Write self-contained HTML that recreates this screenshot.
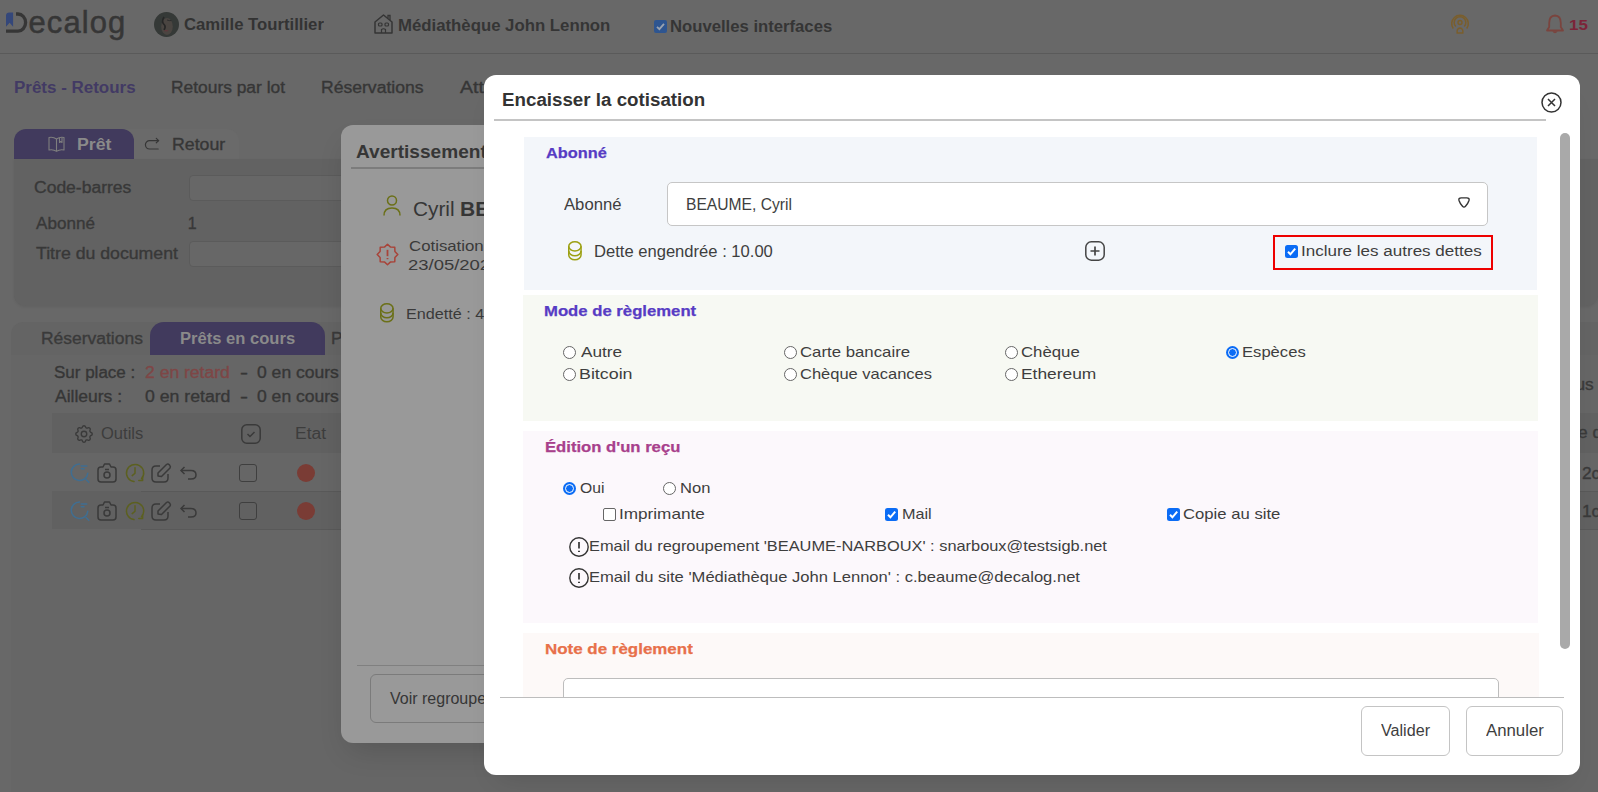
<!DOCTYPE html>
<html lang="fr"><head><meta charset="utf-8"><title>Encaisser la cotisation</title>
<style>
*{margin:0;padding:0;box-sizing:border-box}
html,body{width:1598px;height:792px;overflow:hidden;background:#686868;font-family:"Liberation Sans",sans-serif}
.t{position:absolute;white-space:nowrap}
.b{position:absolute}
svg{position:absolute;overflow:visible}
</style></head><body>
<!-- ============ BASE PAGE (under overlays) ============ -->
<div class="b" style="left:0;top:53px;width:1598px;height:1px;background:#5a5a5a"></div>
<!-- logo -->
<svg style="left:0;top:0" width="30" height="40" viewBox="0 0 30 40"><path d="M16 14 H18 A7.6 8.6 0 0 1 18 31.2 H6" fill="none" stroke="#363636" stroke-width="3.3"/><path d="M6 26.7 V15.5 Q6 12.5 9.5 12.5 H13.1 V26.7 L9.6 22.8 Z" fill="#34477a"/></svg>
<div class="t" style="left:28.5px;top:6.5px;font-size:31px;line-height:31px;color:#363636;letter-spacing:1.1px;-webkit-text-stroke:0.5px #363636">ecalog</div>
<!-- avatar -->
<svg style="left:154px;top:12px" width="25" height="25" viewBox="0 0 25 25"><defs><clipPath id="avc"><circle cx="12.5" cy="12.5" r="12.5"/></clipPath></defs><g clip-path="url(#avc)"><rect width="25" height="25" fill="#353937"/><ellipse cx="13" cy="14.5" rx="5.8" ry="8.5" fill="#4a4541"/><path d="M10 5 Q7 10 10.5 13 Q12 15 10 18" fill="none" stroke="#262626" stroke-width="1.6"/><path d="M13 8 Q15 9 17.5 8.5" fill="none" stroke="#2e2e2e" stroke-width="1"/><ellipse cx="12.2" cy="18.8" rx="2.2" ry="0.8" fill="#5e3a3d"/></g></svg>
<div class="t" style="left:183.66px;top:17.00px;font-size:16px;line-height:16px;font-weight:700;color:#333;transform:scaleX(1.0444);transform-origin:0 0;">Camille Tourtillier</div>
<!-- house icon -->
<svg style="left:374px;top:14px" width="19" height="20" viewBox="0 0 19 20"><path d="M1 19 V8 L9.5 1 L18 8 V19 Z M1 19 H18" fill="none" stroke="#353535" stroke-width="1.5" stroke-linejoin="round"/><path d="M14 4 V1.5 H16 V6" fill="none" stroke="#353535" stroke-width="1.3"/><rect x="4.5" y="9" width="3.5" height="3" rx="1" fill="none" stroke="#353535" stroke-width="1.2"/><rect x="11" y="9" width="3.5" height="3" rx="1" fill="none" stroke="#353535" stroke-width="1.2"/><path d="M7.5 19 V15.5 Q9.5 14 11.5 15.5 V19" fill="none" stroke="#353535" stroke-width="1.2"/></svg>
<div class="t" style="left:397.95px;top:18.00px;font-size:16px;line-height:16px;font-weight:700;color:#353535;transform:scaleX(1.0478);transform-origin:0 0;">Médiathèque John Lennon</div>
<!-- checkbox header -->
<div class="b" style="left:654px;top:20px;width:13px;height:13px;border-radius:2px;background:#2e5590"></div>
<svg style="left:654px;top:20px" width="13" height="13" viewBox="0 0 13 13"><path d="M3 6.8 L5.4 9.2 L10 3.8" fill="none" stroke="#9aa3b0" stroke-width="1.8"/></svg>
<div class="t" style="left:670.46px;top:19.00px;font-size:16px;line-height:16px;font-weight:700;color:#353535;transform:scaleX(1.0422);transform-origin:0 0;">Nouvelles interfaces</div>
<!-- radar icon -->
<svg style="left:1451px;top:14px" width="18" height="20" viewBox="0 0 18 20"><g fill="none" stroke="#7a5e2c" stroke-width="1.5"><circle cx="9" cy="8.5" r="2"/><path d="M4.8 12.5 A5.8 5.8 0 1 1 13.2 12.5"/><path d="M2.3 14.5 A8.3 8.3 0 1 1 15.7 14.5"/><path d="M6.2 19 Q5.5 14.5 9 14 Q12.5 14.5 11.8 19 Z"/></g></svg>
<!-- bell -->
<svg style="left:1546px;top:14px" width="18" height="21" viewBox="0 0 18 21"><g fill="none" stroke="#7a443e" stroke-width="1.8" stroke-linejoin="round"><path d="M9 1.5 Q3.2 1.8 3.2 9 V13 L1 16.5 H17 L14.8 13 V9 Q14.8 1.8 9 1.5 Z"/></g><path d="M6.3 17.2 Q9 21.5 11.7 17.2 Z" fill="#7a443e"/></svg>
<div class="t" style="left:1568.87px;top:17.00px;font-size:15px;line-height:15px;font-weight:700;color:#7c2439;transform:scaleX(1.1333);transform-origin:0 0;">15</div>
<!-- nav -->
<div class="t" style="left:14.34px;top:80.00px;font-size:16px;line-height:16px;font-weight:700;color:#423a64;transform:scaleX(1.0602);transform-origin:0 0;">Prêts - Retours</div><div class="t" style="left:171.21px;top:80.00px;font-size:16px;line-height:16px;font-weight:400;color:#363636;transform:scaleX(1.0865);transform-origin:0 0;-webkit-text-stroke:0.35px #363636;">Retours par lot</div><div class="t" style="left:320.90px;top:80.00px;font-size:16px;line-height:16px;font-weight:400;color:#363636;transform:scaleX(1.0978);transform-origin:0 0;-webkit-text-stroke:0.35px #363636;">Réservations</div><div class="t" style="left:459.80px;top:80.00px;font-size:16px;line-height:16px;font-weight:400;color:#363636;transform:scaleX(1.2200);transform-origin:0 0;-webkit-text-stroke:0.35px #363636;">Attentes</div>
<!-- tabs card 1 -->
<div class="b" style="left:14px;top:129px;width:225px;height:30px;background:#6a6a6a;border-radius:12px 12px 0 0"></div>
<div class="b" style="left:14px;top:129px;width:120px;height:30px;background:#413a5d;border-radius:12px 12px 0 0"></div>
<svg style="left:48px;top:136px" width="17" height="16" viewBox="0 0 17 16"><g fill="none" stroke="#7e7e7e" stroke-width="1.1" stroke-linejoin="round"><path d="M8.5 3 Q5 0.5 1 1.5 V14 Q5 13 8.5 15.3 Q12 13 16 14 V1.5 Q12 0.5 8.5 3 Z"/><path d="M8.5 3 V15.3"/><path d="M11.5 2 V6.5 L12.7 5.5 L14 6.5 V1.6"/></g></svg>
<div class="t" style="left:76.69px;top:137.00px;font-size:16px;line-height:16px;font-weight:700;color:#8a8a8a;transform:scaleX(1.1067);transform-origin:0 0;">Prêt</div>
<svg style="left:145px;top:139px" width="15" height="12" viewBox="0 0 15 12"><g fill="none" stroke="#363636" stroke-width="1.2" stroke-linecap="round" stroke-linejoin="round"><path d="M13.6 1.6 H4.6 A4.2 4.2 0 0 0 4.6 10 H13.2"/><path d="M11.3 -0.6 L13.6 1.6 L11.3 3.8"/></g></svg>
<div class="t" style="left:171.79px;top:137.00px;font-size:16px;line-height:16px;font-weight:400;color:#363636;transform:scaleX(1.1085);transform-origin:0 0;-webkit-text-stroke:0.35px #363636;">Retour</div>
<div class="b" style="left:14px;top:159px;width:1584px;height:147px;background:#626262;border-radius:0 0 12px 12px;box-shadow:0 1px 3px rgba(0,0,0,.08)"></div>
<div class="t" style="left:34.41px;top:180.00px;font-size:16px;line-height:16px;font-weight:400;color:#383838;transform:scaleX(1.0943);transform-origin:0 0;-webkit-text-stroke:0.35px #383838;">Code-barres</div>
<div class="b" style="left:189px;top:175px;width:1380px;height:26px;background:#676767;border:1px solid #5b5b5b;border-radius:4px"></div>
<div class="t" style="left:35.50px;top:216.00px;font-size:16px;line-height:16px;font-weight:400;color:#383838;transform:scaleX(1.0673);transform-origin:0 0;-webkit-text-stroke:0.35px #383838;">Abonné</div><div class="t" style="left:187.80px;top:216.00px;font-size:16px;line-height:16px;font-weight:400;color:#383838;-webkit-text-stroke:0.35px #383838;">1</div><div class="t" style="left:35.50px;top:246.00px;font-size:16px;line-height:16px;font-weight:400;color:#383838;transform:scaleX(1.1055);transform-origin:0 0;-webkit-text-stroke:0.35px #383838;">Titre du document</div>
<div class="b" style="left:189px;top:241px;width:1380px;height:26px;background:#676767;border:1px solid #5b5b5b;border-radius:4px"></div>
<!-- card 2 -->
<div class="b" style="left:11px;top:322px;width:1587px;height:33px;background:#646464;border-radius:12px 0 0 0"></div>
<div class="b" style="left:150px;top:322px;width:175px;height:33px;background:#413a5d;border-radius:14px 14px 0 0"></div>
<div class="t" style="left:40.51px;top:331.00px;font-size:16px;line-height:16px;font-weight:400;color:#3a3a3a;transform:scaleX(1.0913);transform-origin:0 0;-webkit-text-stroke:0.35px #3a3a3a;">Réservations</div><div class="t" style="left:179.66px;top:331.00px;font-size:16px;line-height:16px;font-weight:700;color:#8a8a8a;transform:scaleX(1.0355);transform-origin:0 0;">Prêts en cours</div><div class="t" style="left:330.72px;top:331.00px;font-size:16px;line-height:16px;font-weight:400;color:#3a3a3a;transform:scaleX(1.0800);transform-origin:0 0;-webkit-text-stroke:0.35px #3a3a3a;">Prolongations</div>
<div class="b" style="left:11px;top:355px;width:1587px;height:437px;background:#666"></div>
<div class="t" style="left:54.34px;top:365.00px;font-size:16px;line-height:16px;font-weight:400;color:#363636;transform:scaleX(1.0622);transform-origin:0 0;-webkit-text-stroke:0.35px #363636;">Sur place :</div><div class="t" style="left:144.50px;top:365.00px;font-size:16px;line-height:16px;font-weight:400;color:#7e4646;transform:scaleX(1.0961);transform-origin:0 0;-webkit-text-stroke:0.35px #7e4646;">2 en retard</div><div class="t" style="left:239.50px;top:365.00px;font-size:16px;line-height:16px;font-weight:400;color:#363636;transform:scaleX(1.5000);transform-origin:0 0;-webkit-text-stroke:0.35px #363636;">-</div><div class="t" style="left:257.30px;top:365.00px;font-size:16px;line-height:16px;font-weight:400;color:#363636;transform:scaleX(1.0959);transform-origin:0 0;-webkit-text-stroke:0.35px #363636;">0 en cours</div><div class="t" style="left:55.40px;top:389.00px;font-size:16px;line-height:16px;font-weight:400;color:#363636;transform:scaleX(1.0933);transform-origin:0 0;-webkit-text-stroke:0.35px #363636;">Ailleurs :</div><div class="t" style="left:144.50px;top:389.00px;font-size:16px;line-height:16px;font-weight:400;color:#363636;transform:scaleX(1.1039);transform-origin:0 0;-webkit-text-stroke:0.35px #363636;">0 en retard</div><div class="t" style="left:239.50px;top:389.00px;font-size:16px;line-height:16px;font-weight:400;color:#363636;transform:scaleX(1.5000);transform-origin:0 0;-webkit-text-stroke:0.35px #363636;">-</div><div class="t" style="left:257.30px;top:389.00px;font-size:16px;line-height:16px;font-weight:400;color:#363636;transform:scaleX(1.0959);transform-origin:0 0;-webkit-text-stroke:0.35px #363636;">0 en cours</div>
<div class="b" style="left:52px;top:413px;width:1546px;height:40px;background:#616161"></div>
<div class="b" style="left:52px;top:453px;width:1546px;height:38px;background:#666"></div>
<div class="b" style="left:52px;top:491px;width:1546px;height:38px;background:#616161"></div>
<div class="b" style="left:141px;top:491px;width:1457px;height:1px;background:#595959"></div>
<div class="b" style="left:141px;top:529px;width:1457px;height:1px;background:#595959"></div>
<!-- gear -->
<svg style="left:73px;top:423px" width="22" height="22" viewBox="0 0 24 24"><g fill="none" stroke="#3a3a3a" stroke-width="1.5" stroke-linecap="round" stroke-linejoin="round"><path d="M10.325 4.317c.426 -1.756 2.924 -1.756 3.35 0a1.724 1.724 0 0 0 2.573 1.066c1.543 -.94 3.31 .826 2.37 2.37a1.724 1.724 0 0 0 1.065 2.572c1.756 .426 1.756 2.924 0 3.35a1.724 1.724 0 0 0 -1.066 2.573c.94 1.543 -.826 3.31 -2.37 2.37a1.724 1.724 0 0 0 -2.572 1.065c-.426 1.756 -2.924 1.756 -3.35 0a1.724 1.724 0 0 0 -2.573 -1.066c-1.543 .94 -3.31 -.826 -2.37 -2.37a1.724 1.724 0 0 0 -1.065 -2.572c-1.756 -.426 -1.756 -2.924 0 -3.35a1.724 1.724 0 0 0 1.066 -2.573c-.94 -1.543 .826 -3.31 2.37 -2.37c1 .608 2.296 .07 2.572 -1.065z"/><circle cx="12" cy="12" r="3"/></g></svg>
<div class="t" style="left:100.67px;top:426.00px;font-size:16px;line-height:16px;font-weight:400;color:#3d3d3d;transform:scaleX(1.0325);transform-origin:0 0;">Outils</div>
<svg style="left:241px;top:424px" width="20" height="20" viewBox="0 0 20 20"><g fill="none" stroke="#3a3a3a" stroke-width="1.5"><rect x="0.8" y="0.8" width="18.4" height="18.4" rx="5"/><path d="M6.5 10 L9 12.5 L13.5 8"/></g></svg>
<div class="t" style="left:295.41px;top:426.00px;font-size:16px;line-height:16px;font-weight:400;color:#3d3d3d;transform:scaleX(1.0926);transform-origin:0 0;">Etat</div>
<!-- row icons -->
<svg style="left:70px;top:463px" width="21" height="20" viewBox="0 0 21 20"><g fill="none" stroke="#3f6e92" stroke-width="1.5" stroke-linecap="round"><path d="M9.5 1 A8.3 8.3 0 1 0 17.8 10.2"/><path d="M11.2 3 H16.8 M11.2 5.8 H14"/><path d="M16 16.5 L18.8 19.2"/></g></svg>
<svg style="left:97px;top:463px" width="20" height="20" viewBox="0 0 20 20"><g fill="none" stroke="#3a3a3a" stroke-width="1.5" stroke-linejoin="round"><path d="M1 7 Q1 4 4 4 H6 L7.5 1 H12.5 L14 4 H16 Q19 4 19 7 V16 Q19 19 16 19 H4 Q1 19 1 16 Z"/><circle cx="10" cy="12" r="3"/><path d="M8 6.5 H12"/></g></svg>
<svg style="left:125px;top:463px" width="20" height="20" viewBox="0 0 20 20"><g fill="none" stroke="#5c6020" stroke-width="1.5" stroke-linecap="round" stroke-linejoin="round"><path d="M9 18.6 A8.6 8.6 0 1 1 16.5 15.8"/><path d="M10 4.8 V10.2 L7.2 12.6"/><path d="M13.8 17.6 H17.6 V13.8"/></g></svg>
<svg style="left:151px;top:463px" width="21" height="20" viewBox="0 0 21 20"><g fill="none" stroke="#3a3a3a" stroke-width="1.5" stroke-linejoin="round"><path d="M9 3 H5 Q1 3 1 7 V15 Q1 19 5 19 H13 Q17 19 17 15 V11"/><path d="M7 13 V10 L15.5 1.5 Q17 0.5 18.5 2 Q20 3.5 19 5 L10.5 13.5 Z"/></g></svg>
<svg style="left:180px;top:466px" width="17" height="14" viewBox="0 0 17 14"><g fill="none" stroke="#3a3a3a" stroke-width="1.5"><path d="M4.5 1 L1 4.5 L4.5 8"/><path d="M1 4.5 H11 Q16 4.5 16 9 Q16 13 11 13 H8"/></g></svg>
<div class="b" style="left:239px;top:464px;width:18px;height:18px;border:1.5px solid #3f3f3f;border-radius:3px"></div>
<div class="b" style="left:297px;top:464px;width:18px;height:18px;border-radius:50%;background:#7a3c35"></div>
<svg style="left:70px;top:501px" width="21" height="20" viewBox="0 0 21 20"><g fill="none" stroke="#3f6e92" stroke-width="1.5" stroke-linecap="round"><path d="M9.5 1 A8.3 8.3 0 1 0 17.8 10.2"/><path d="M11.2 3 H16.8 M11.2 5.8 H14"/><path d="M16 16.5 L18.8 19.2"/></g></svg>
<svg style="left:97px;top:501px" width="20" height="20" viewBox="0 0 20 20"><g fill="none" stroke="#3a3a3a" stroke-width="1.5" stroke-linejoin="round"><path d="M1 7 Q1 4 4 4 H6 L7.5 1 H12.5 L14 4 H16 Q19 4 19 7 V16 Q19 19 16 19 H4 Q1 19 1 16 Z"/><circle cx="10" cy="12" r="3"/><path d="M8 6.5 H12"/></g></svg>
<svg style="left:125px;top:501px" width="20" height="20" viewBox="0 0 20 20"><g fill="none" stroke="#5c6020" stroke-width="1.5" stroke-linecap="round" stroke-linejoin="round"><path d="M9 18.6 A8.6 8.6 0 1 1 16.5 15.8"/><path d="M10 4.8 V10.2 L7.2 12.6"/><path d="M13.8 17.6 H17.6 V13.8"/></g></svg>
<svg style="left:151px;top:501px" width="21" height="20" viewBox="0 0 21 20"><g fill="none" stroke="#3a3a3a" stroke-width="1.5" stroke-linejoin="round"><path d="M9 3 H5 Q1 3 1 7 V15 Q1 19 5 19 H13 Q17 19 17 15 V11"/><path d="M7 13 V10 L15.5 1.5 Q17 0.5 18.5 2 Q20 3.5 19 5 L10.5 13.5 Z"/></g></svg>
<svg style="left:180px;top:504px" width="17" height="14" viewBox="0 0 17 14"><g fill="none" stroke="#3a3a3a" stroke-width="1.5"><path d="M4.5 1 L1 4.5 L4.5 8"/><path d="M1 4.5 H11 Q16 4.5 16 9 Q16 13 11 13 H8"/></g></svg>
<div class="b" style="left:239px;top:502px;width:18px;height:18px;border:1.5px solid #3f3f3f;border-radius:3px"></div>
<div class="b" style="left:297px;top:502px;width:18px;height:18px;border-radius:50%;background:#7a3c35"></div>
<!-- right side base texts -->
<div class="t" style="left:1560.60px;top:377.00px;font-size:16px;line-height:16px;font-weight:400;color:#3a3a3a;transform:scaleX(1.0800);transform-origin:0 0;-webkit-text-stroke:0.35px #3a3a3a;">tous</div><div class="t" style="left:1578.42px;top:425.00px;font-size:16px;line-height:16px;font-weight:400;color:#3a3a3a;transform:scaleX(1.0800);transform-origin:0 0;-webkit-text-stroke:0.35px #3a3a3a;">e de retour</div><div class="t" style="left:1581.92px;top:466.00px;font-size:16px;line-height:16px;font-weight:400;color:#3a3a3a;transform:scaleX(1.0800);transform-origin:0 0;-webkit-text-stroke:0.35px #3a3a3a;">2c</div><div class="t" style="left:1581.92px;top:504.00px;font-size:16px;line-height:16px;font-weight:400;color:#3a3a3a;transform:scaleX(1.0800);transform-origin:0 0;-webkit-text-stroke:0.35px #3a3a3a;">1c</div>

<!-- ============ WARN MODAL ============ -->
<div class="b" style="left:341px;top:125px;width:600px;height:618px;background:#999;border-radius:12px;box-shadow:0 14px 30px -8px rgba(0,0,0,.16)"></div>
<div class="t" style="left:356.34px;top:143.00px;font-size:18px;line-height:18px;font-weight:700;color:#363636;transform:scaleX(1.0600);transform-origin:0 0;">Avertissement</div>
<div class="b" style="left:351px;top:167px;width:600px;height:2px;background:#7c7c7c"></div>
<svg style="left:383px;top:195px" width="18" height="21" viewBox="0 0 18 21"><g fill="none" stroke="#6b7018" stroke-width="1.5"><circle cx="9" cy="5.5" r="4.5"/><path d="M1 20.5 Q1 13 9 13 Q17 13 17 20.5"/></g></svg>
<div class="t" style="left:412.86px;top:199.00px;font-size:20px;line-height:20px;font-weight:400;color:#363636;transform:scaleX(1.0400);transform-origin:0 0;">Cyril</div><div class="t" style="left:459.55px;top:199.00px;font-size:20px;line-height:20px;font-weight:700;color:#363636;transform:scaleX(1.0500);transform-origin:0 0;">BEAUME</div>
<svg style="left:376px;top:243px" width="23" height="23" viewBox="0 0 23 23"><g fill="none" stroke="#a8443a" stroke-width="1.5" stroke-linejoin="round"><path d="M11.50 1.20 L14.56 4.11 L18.78 4.22 L18.89 8.44 L21.80 11.50 L18.89 14.56 L18.78 18.78 L14.56 18.89 L11.50 21.80 L8.44 18.89 L4.22 18.78 L4.11 14.56 L1.20 11.50 L4.11 8.44 L4.22 4.22 L8.44 4.11 Z"/><path d="M11.5 6.8 V13.2" stroke-width="1.8"/><path d="M11.5 15 V16.2" stroke-width="1.8"/></g></svg>
<div class="t" style="left:408.58px;top:238.00px;font-size:15px;line-height:15px;font-weight:400;color:#3a3a3a;transform:scaleX(1.1200);transform-origin:0 0;">Cotisation expirée</div><div class="t" style="left:408.47px;top:257.00px;font-size:15px;line-height:15px;font-weight:400;color:#3a3a3a;transform:scaleX(1.2300);transform-origin:0 0;">23/05/2024</div>
<svg style="left:380px;top:303px" width="14" height="20" viewBox="0 0 14 20"><g fill="none" stroke="#6b7018" stroke-width="1.5"><ellipse cx="6.9" cy="5.35" rx="6.15" ry="4.6"/><path d="M0.75 5.35 V10 A6.15 4.75 0 0 0 13.05 10 V5.35"/><path d="M0.75 10 V14 A6.15 4.75 0 0 0 13.05 14 V10"/></g></svg>
<div class="t" style="left:405.92px;top:306.00px;font-size:15px;line-height:15px;font-weight:400;color:#3a3a3a;transform:scaleX(1.0800);transform-origin:0 0;">Endetté : 40.00</div>
<div class="b" style="left:357px;top:665px;width:600px;height:1px;background:#808080"></div>
<div class="b" style="left:370px;top:674px;width:300px;height:49px;border:1px solid #7b7b7b;border-radius:6px"></div>
<div class="t" style="left:390.00px;top:691.00px;font-size:16px;line-height:16px;font-weight:400;color:#363636;">Voir regroupement</div>

<!-- ============ MAIN MODAL ============ -->
<div class="b" style="left:484px;top:75px;width:1096px;height:700px;background:#fff;border-radius:12px;box-shadow:0 16px 26px -14px rgba(0,0,0,.14)"></div>
<div class="t" style="left:501.96px;top:91.00px;font-size:18px;line-height:18px;font-weight:700;color:#333;transform:scaleX(1.0415);transform-origin:0 0;">Encaisser la cotisation</div>
<svg style="left:1541px;top:92px" width="21" height="21" viewBox="0 0 21 21"><g fill="none" stroke="#333" stroke-width="1.5"><circle cx="10.5" cy="10.5" r="9.5"/><path d="M7 7 L14 14 M14 7 L7 14"/></g></svg>
<div class="b" style="left:494px;top:119px;width:1052px;height:2px;background:#c4c4c4"></div>
<!-- section 1 -->
<div class="b" style="left:524px;top:137px;width:1013px;height:153px;background:#f3f6fa"></div>
<div class="t" style="left:546.20px;top:145.00px;font-size:15px;line-height:15px;font-weight:700;color:#573cc4;transform:scaleX(1.0893);transform-origin:0 0;-webkit-text-stroke:0.25px #573cc4;">Abonné</div><div class="t" style="left:564.40px;top:197.00px;font-size:16px;line-height:16px;font-weight:400;color:#3e3e3e;transform:scaleX(1.0418);transform-origin:0 0;">Abonné</div>
<div class="b" style="left:667px;top:182px;width:821px;height:44px;background:#fff;border:1px solid #c6c6c6;border-radius:5px"></div>
<div class="t" style="left:685.92px;top:197.00px;font-size:16px;line-height:16px;font-weight:400;color:#3e3e3e;transform:scaleX(0.9766);transform-origin:0 0;">BEAUME, Cyril</div>
<svg style="left:1458px;top:197px" width="12" height="11" viewBox="0 0 12 11"><path d="M3.2 0.9 H8.8 Q11.7 0.9 11 3.4 Q9.8 6.8 7.5 9.3 Q6 10.9 4.5 9.3 Q2.2 6.8 1 3.4 Q0.3 0.9 3.2 0.9 Z" fill="none" stroke="#333" stroke-width="1.4" stroke-linejoin="round"/></svg>
<svg style="left:568px;top:241px" width="14" height="20" viewBox="0 0 14 20"><g fill="none" stroke="#9ca012" stroke-width="1.5"><ellipse cx="6.9" cy="5.35" rx="6.15" ry="4.6"/><path d="M0.75 5.35 V10 A6.15 4.75 0 0 0 13.05 10 V5.35"/><path d="M0.75 10 V14 A6.15 4.75 0 0 0 13.05 14 V10"/></g></svg>
<div class="t" style="left:593.76px;top:244.00px;font-size:16px;line-height:16px;font-weight:400;color:#3e3e3e;transform:scaleX(1.0363);transform-origin:0 0;">Dette engendrée : 10.00</div>
<svg style="left:1085px;top:241px" width="20" height="20" viewBox="0 0 20 20"><g fill="none" stroke="#444" stroke-width="1.5"><rect x="0.8" y="0.8" width="18.4" height="18.4" rx="5.5"/><path d="M10 5.5 V14.5 M5.5 10 H14.5" stroke-width="1.7"/></g></svg>
<div class="b" style="left:1273px;top:235px;width:220px;height:35px;border:2px solid #ee0000"></div>
<div class="b" style="left:1285px;top:245px;width:13px;height:13px;border-radius:2.5px;background:#0b6cf5"></div>
<svg style="left:1285px;top:245px" width="13" height="13" viewBox="0 0 13 13"><path d="M3 6.8 L5.4 9.3 L10.2 3.6" fill="none" stroke="#fff" stroke-width="2"/></svg>
<div class="t" style="left:1301.40px;top:243.00px;font-size:15.5px;line-height:15.5px;font-weight:400;color:#3e3e3e;transform:scaleX(1.0982);transform-origin:0 0;">Inclure les autres dettes</div>
<!-- section 2 -->
<div class="b" style="left:523px;top:295px;width:1015px;height:126px;background:#f7f9f3"></div>
<div class="t" style="left:544.49px;top:303.00px;font-size:15px;line-height:15px;font-weight:700;color:#573cc4;transform:scaleX(1.1132);transform-origin:0 0;-webkit-text-stroke:0.25px #573cc4;">Mode de règlement</div>
<div class="b" style="left:563px;top:346px;width:13px;height:13px;border-radius:50%;border:1px solid #666;background:#fff"></div>
<div class="b" style="left:784px;top:346px;width:13px;height:13px;border-radius:50%;border:1px solid #666;background:#fff"></div>
<div class="b" style="left:1005px;top:346px;width:13px;height:13px;border-radius:50%;border:1px solid #666;background:#fff"></div>
<div class="b" style="left:1226px;top:346px;width:13px;height:13px;border-radius:50%;background:#0b6cf5"></div>
<div class="b" style="left:1228px;top:348px;width:9px;height:9px;border-radius:50%;background:#0b6cf5;border:1.5px solid #fff"></div>
<div class="b" style="left:563px;top:368px;width:13px;height:13px;border-radius:50%;border:1px solid #666;background:#fff"></div>
<div class="b" style="left:784px;top:368px;width:13px;height:13px;border-radius:50%;border:1px solid #666;background:#fff"></div>
<div class="b" style="left:1005px;top:368px;width:13px;height:13px;border-radius:50%;border:1px solid #666;background:#fff"></div>
<div class="t" style="left:580.60px;top:344.00px;font-size:15px;line-height:15px;font-weight:400;color:#3e3e3e;transform:scaleX(1.1486);transform-origin:0 0;">Autre</div><div class="t" style="left:800.38px;top:344.00px;font-size:15px;line-height:15px;font-weight:400;color:#3e3e3e;transform:scaleX(1.1186);transform-origin:0 0;">Carte bancaire</div><div class="t" style="left:1020.88px;top:344.00px;font-size:15px;line-height:15px;font-weight:400;color:#3e3e3e;transform:scaleX(1.1176);transform-origin:0 0;">Chèque</div><div class="t" style="left:1241.89px;top:344.00px;font-size:15px;line-height:15px;font-weight:400;color:#3e3e3e;transform:scaleX(1.1071);transform-origin:0 0;">Espèces</div><div class="t" style="left:579.41px;top:366.00px;font-size:15px;line-height:15px;font-weight:400;color:#3e3e3e;transform:scaleX(1.1884);transform-origin:0 0;">Bitcoin</div><div class="t" style="left:800.40px;top:366.00px;font-size:15px;line-height:15px;font-weight:400;color:#3e3e3e;transform:scaleX(1.0992);transform-origin:0 0;">Chèque vacances</div><div class="t" style="left:1020.84px;top:366.00px;font-size:15px;line-height:15px;font-weight:400;color:#3e3e3e;transform:scaleX(1.1587);transform-origin:0 0;">Ethereum</div>
<!-- section 3 -->
<div class="b" style="left:523px;top:431px;width:1015px;height:192px;background:#fcf8fc"></div>
<div class="t" style="left:544.69px;top:439.00px;font-size:15px;line-height:15px;font-weight:700;color:#a8408c;transform:scaleX(1.1100);transform-origin:0 0;-webkit-text-stroke:0.25px #a8408c;">Édition d&#x27;un reçu</div>
<div class="b" style="left:563px;top:482px;width:13px;height:13px;border-radius:50%;background:#0b6cf5"></div>
<div class="b" style="left:565px;top:484px;width:9px;height:9px;border-radius:50%;background:#0b6cf5;border:1.5px solid #fff"></div>
<div class="b" style="left:663px;top:482px;width:13px;height:13px;border-radius:50%;border:1px solid #666;background:#fff"></div>
<div class="t" style="left:579.55px;top:480.00px;font-size:15px;line-height:15px;font-weight:400;color:#3e3e3e;transform:scaleX(1.0455);transform-origin:0 0;">Oui</div><div class="t" style="left:679.50px;top:480.00px;font-size:15px;line-height:15px;font-weight:400;color:#3e3e3e;transform:scaleX(1.1038);transform-origin:0 0;">Non</div>
<div class="b" style="left:603px;top:508px;width:13px;height:13px;border-radius:2px;border:1px solid #666;background:#fff"></div>
<div class="b" style="left:885px;top:508px;width:13px;height:13px;border-radius:2.5px;background:#0b6cf5"></div>
<svg style="left:885px;top:508px" width="13" height="13" viewBox="0 0 13 13"><path d="M3 6.8 L5.4 9.3 L10.2 3.6" fill="none" stroke="#fff" stroke-width="2"/></svg>
<div class="b" style="left:1167px;top:508px;width:13px;height:13px;border-radius:2.5px;background:#0b6cf5"></div>
<svg style="left:1167px;top:508px" width="13" height="13" viewBox="0 0 13 13"><path d="M3 6.8 L5.4 9.3 L10.2 3.6" fill="none" stroke="#fff" stroke-width="2"/></svg>
<div class="t" style="left:619.46px;top:506.00px;font-size:15px;line-height:15px;font-weight:400;color:#3e3e3e;transform:scaleX(1.1432);transform-origin:0 0;">Imprimante</div><div class="t" style="left:901.52px;top:506.00px;font-size:15px;line-height:15px;font-weight:400;color:#3e3e3e;transform:scaleX(1.0808);transform-origin:0 0;">Mail</div><div class="t" style="left:1182.89px;top:506.00px;font-size:15px;line-height:15px;font-weight:400;color:#3e3e3e;transform:scaleX(1.1116);transform-origin:0 0;">Copie au site</div>
<svg style="left:569px;top:537px" width="20" height="20" viewBox="0 0 20 20"><g fill="none" stroke="#333" stroke-width="1.4"><circle cx="10" cy="10" r="9.2"/><path d="M10 5 V11.5" stroke-width="1.7"/><path d="M10 13.8 V15" stroke-width="1.9"/></g></svg>
<div class="t" style="left:588.61px;top:538.00px;font-size:15px;line-height:15px;font-weight:400;color:#3e3e3e;transform:scaleX(1.0915);transform-origin:0 0;">Email du regroupement &#x27;BEAUME-NARBOUX&#x27; : snarboux@testsigb.net</div>
<svg style="left:569px;top:568px" width="20" height="20" viewBox="0 0 20 20"><g fill="none" stroke="#333" stroke-width="1.4"><circle cx="10" cy="10" r="9.2"/><path d="M10 5 V11.5" stroke-width="1.7"/><path d="M10 13.8 V15" stroke-width="1.9"/></g></svg>
<div class="t" style="left:588.60px;top:569.00px;font-size:15px;line-height:15px;font-weight:400;color:#3e3e3e;transform:scaleX(1.1043);transform-origin:0 0;">Email du site &#x27;Médiathèque John Lennon&#x27; : c.beaume@decalog.net</div>
<!-- section 4 (clipped) -->
<div class="b" style="left:498px;top:623px;width:1062px;height:74px;overflow:hidden">
  <div class="b" style="left:25px;top:10px;width:1016px;height:80px;background:#fdf9f8"></div>
  <div class="b" style="left:65px;top:55px;width:936px;height:60px;background:#fff;border:1px solid #bdbdbd;border-radius:5px"></div>
</div>
<div class="t" style="left:544.67px;top:641.00px;font-size:15px;line-height:15px;font-weight:700;color:#e8704a;transform:scaleX(1.1292);transform-origin:0 0;-webkit-text-stroke:0.25px #e8704a;">Note de règlement</div>
<div class="b" style="left:1560px;top:133px;width:10px;height:516px;background:#a9a9a9;border-radius:5px"></div>
<div class="b" style="left:500px;top:697px;width:1064px;height:1px;background:#bdbdbd"></div>
<div class="b" style="left:1361px;top:706px;width:89px;height:50px;border:1px solid #c4c4c4;border-radius:6px;background:#fff"></div>
<div class="b" style="left:1466px;top:706px;width:97px;height:50px;border:1px solid #c4c4c4;border-radius:6px;background:#fff"></div>
<div class="t" style="left:1381.00px;top:723.00px;font-size:16px;line-height:16px;font-weight:400;color:#3e3e3e;transform:scaleX(1.0082);transform-origin:0 0;">Valider</div><div class="t" style="left:1486.00px;top:723.00px;font-size:16px;line-height:16px;font-weight:400;color:#3e3e3e;transform:scaleX(1.0491);transform-origin:0 0;">Annuler</div>
</body></html>
